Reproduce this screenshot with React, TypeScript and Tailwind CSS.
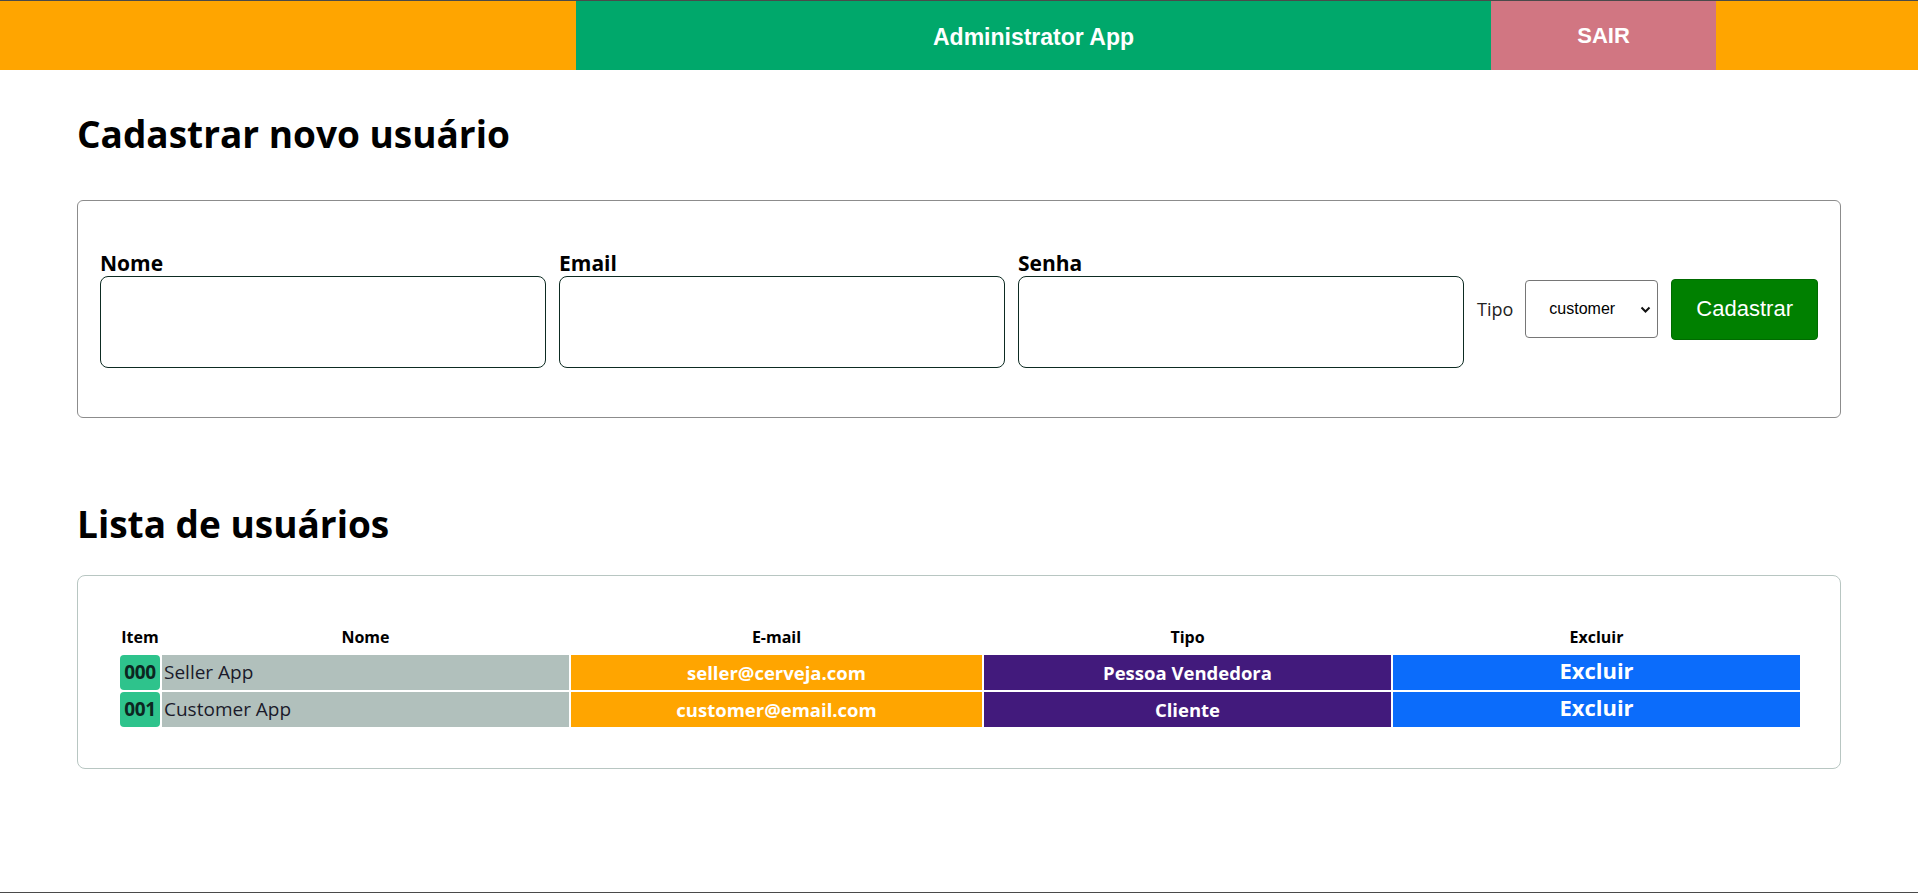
import React from "react";

const SEGOE = "font-['Open_Sans','Noto_Sans',sans-serif]";
const ARIAL = "font-['Liberation_Sans',Arial,sans-serif]";

function Field({ label }: { label: string }) {
  return (
    <div className="flex flex-col">
      <span className="text-[21px] leading-[26px] font-bold text-black">{label}</span>
      <div className="w-[446px] h-[92px] border border-[#0d2b22] rounded-[8px] bg-white" />
    </div>
  );
}

const users = [
  { id: "000", name: "Seller App", email: "seller@cerveja.com", role: "Pessoa Vendedora" },
  { id: "001", name: "Customer App", email: "customer@email.com", role: "Cliente" },
];

export default function App() {
  return (
    <div className={`h-[893px] bg-white border-t border-b border-[#4a4a4a] flex flex-col ${SEGOE}`}>
      <header className={`flex h-[69px] shrink-0 ${ARIAL}`}>
        <div className="w-[576px] bg-[#ffa500]" />
        <div className="w-[915px] bg-[#00a86b] flex items-center justify-center text-white font-bold text-[23px] pt-[3px]">
          Administrator App
        </div>
        <div className="w-[225px] bg-[#d17682] flex items-center justify-center text-white font-bold text-[22px]">
          SAIR
        </div>
        <div className="flex-1 bg-[#ffa500]" />
      </header>

      <main className="px-[77px]">
        <h1 className="mt-[42px] mb-[44px] text-[37px] leading-[44px] font-bold text-black">
          Cadastrar novo usuário
        </h1>

        <div className="h-[218px] border border-[#8c8c8c] rounded-[6px] px-[22px] flex items-center gap-[13px]">
          <Field label="Nome" />
          <Field label="Email" />
          <Field label="Senha" />
          <div className="flex items-center gap-[12px]">
            <span className="text-[18px] text-[#222]">Tipo</span>
            <div className={`w-[133px] h-[58px] border border-[#767676] rounded-[4px] flex items-center pl-[23px] pr-[6px] ${ARIAL}`}>
              <span className="text-[16px] text-black flex-1">customer</span>
              <svg width="11" height="8" viewBox="0 0 11 8" className="mt-[2px]">
                <path d="M1.5 1.5 L5.5 5.5 L9.5 1.5" fill="none" stroke="#111" strokeWidth="2" />
              </svg>
            </div>
          </div>
          <button
            className={`w-[148px] h-[61px] bg-[#008000] border border-[#006a00] rounded-[4px] text-white text-[22px] ${ARIAL} pb-[2px]`}
          >
            Cadastrar
          </button>
        </div>

        <h1 className="mt-[84px] mb-[29px] text-[37px] leading-[44px] font-bold text-black">
          Lista de usuários
        </h1>

        <div className="h-[194px] border border-[#b8c6c2] rounded-[8px] pt-[47px] pl-[40px] pr-[39px]">
          <table className="table-fixed border-separate border-spacing-[2px] w-[1684px]">
            <thead>
              <tr className="text-[16px] leading-[20px] font-bold text-black">
                <th className="w-[40px] pt-[2px] pb-[6px]">Item</th>
                <th className="w-[407px] pt-[2px] pb-[6px]">Nome</th>
                <th className="w-[411px] pt-[2px] pb-[6px]">E-mail</th>
                <th className="w-[407px] pt-[2px] pb-[6px]">Tipo</th>
                <th className="w-[407px] pt-[2px] pb-[6px]">Excluir</th>
              </tr>
            </thead>
            <tbody>
              {users.map((u) => (
                <tr key={u.id} className="h-[35px]">
                  <td className="bg-[#2ec38c] rounded-[4px] text-center font-bold text-[19px] tracking-[-0.3px] text-[#0c2621] p-0">
                    {u.id}
                  </td>
                  <td className="bg-[#b1c0bc] text-left pl-[2px] text-[19px] text-[#1a1a2a] p-0">
                    {u.name}
                  </td>
                  <td className="bg-[#ffa500] text-center font-bold text-[18.5px] text-white p-0">
                    {u.email}
                  </td>
                  <td className="bg-[#421a7c] text-center font-bold text-[18.5px] text-white p-0">
                    {u.role}
                  </td>
                  <td className="bg-[#0b6cfb] text-center font-bold text-[22px] text-white p-0 leading-[30px] align-top">
                    Excluir
                  </td>
                </tr>
              ))}
            </tbody>
          </table>
        </div>
      </main>
    </div>
  );
}
